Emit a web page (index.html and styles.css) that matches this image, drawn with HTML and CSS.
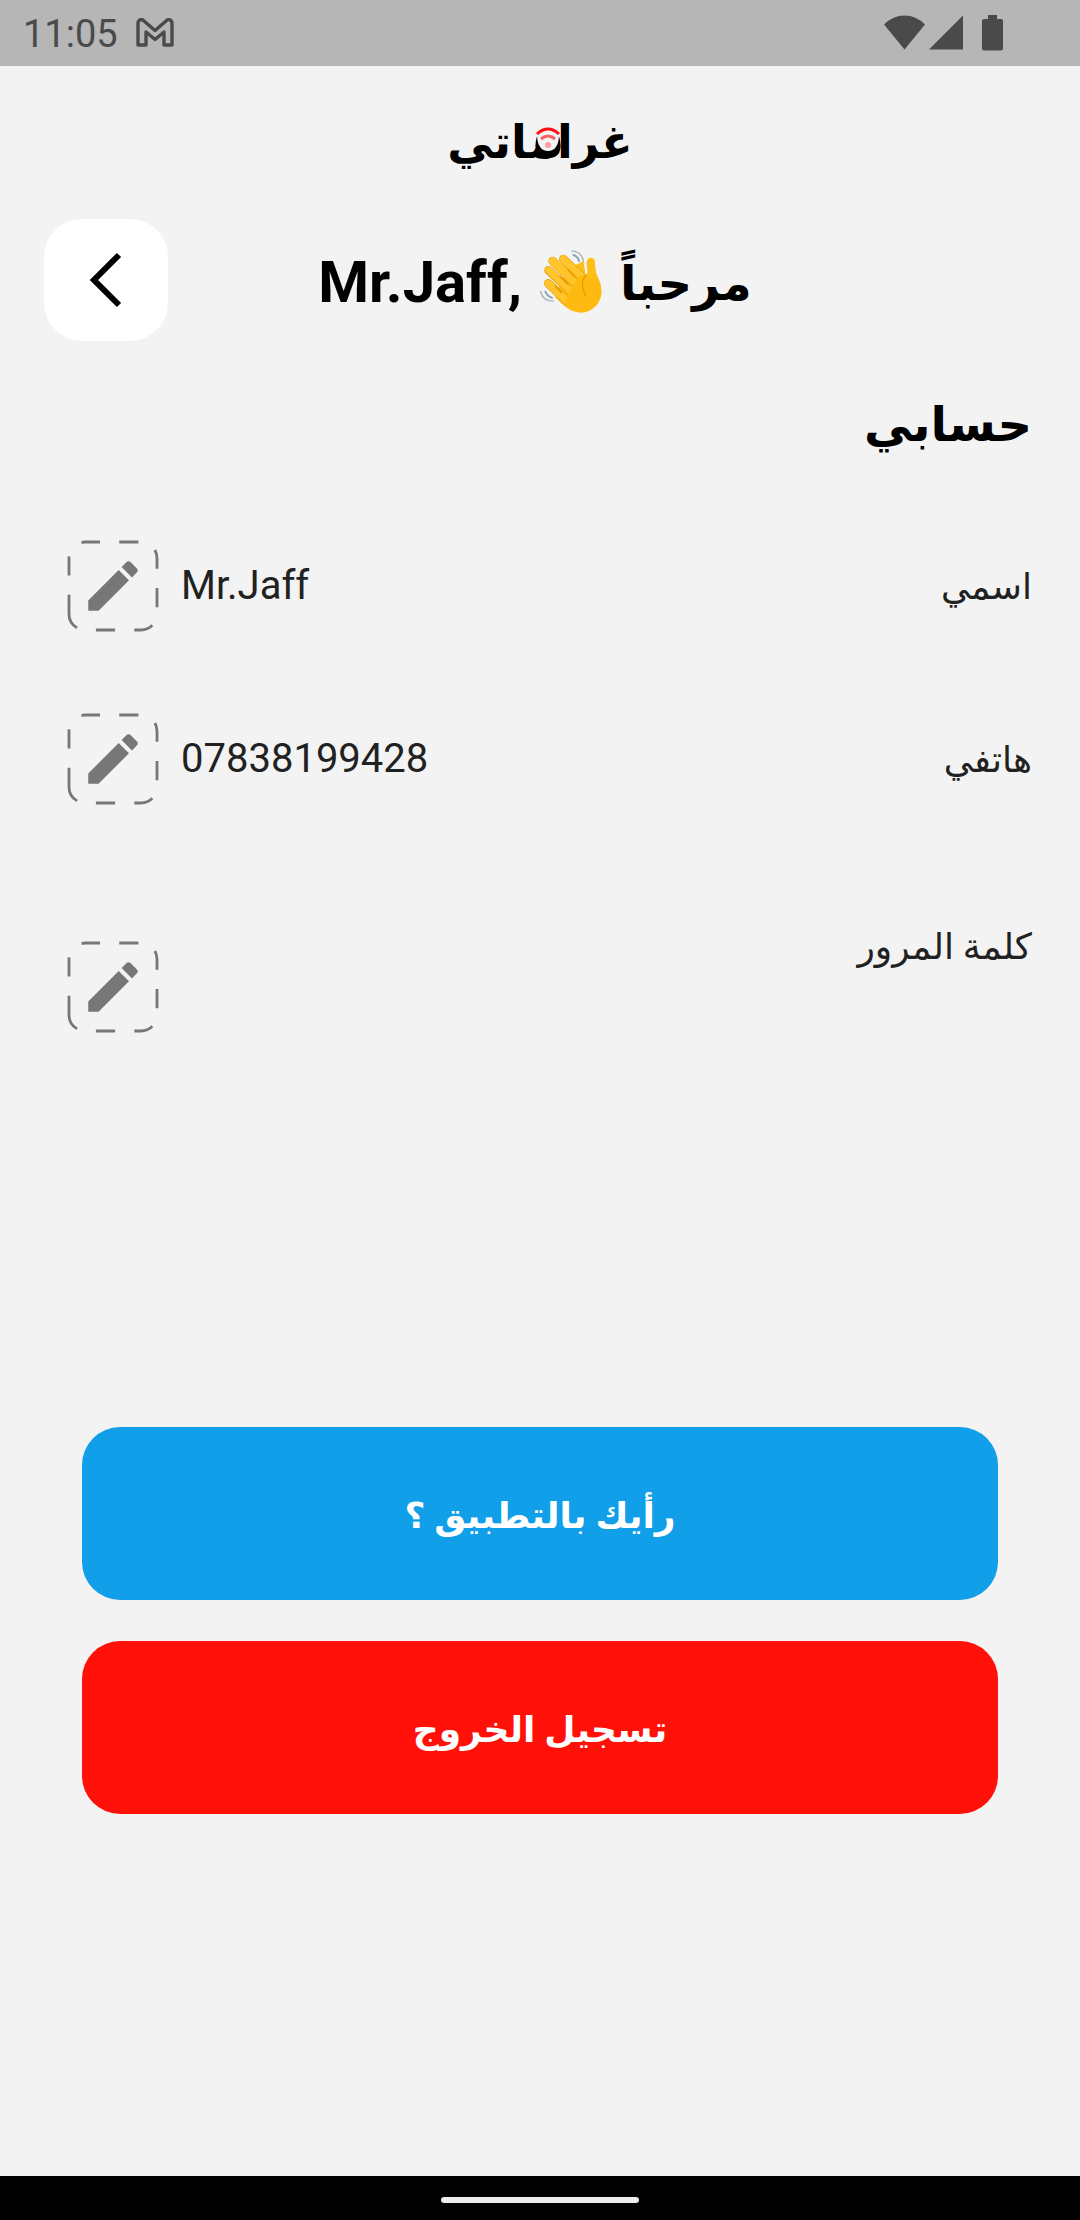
FILE: index.html
```html
<!DOCTYPE html>
<html lang="ar" dir="rtl">
<head>
  <meta charset="UTF-8">
  <meta name="viewport" content="width=device-width, initial-scale=1.0">
  <title>حسابي</title>
  <link rel="stylesheet" href="styles.css">
</head>
<body>

  <!-- shared edit icon -->
  <svg class="sprite" aria-hidden="true">
    <symbol id="edit" viewBox="0 0 96 96">
      <path d="M4 77V21A16 16 0 0 1 20 5H76A16 16 0 0 1 92 21V77A16 16 0 0 1 76 93H20A16 16 0 0 1 4 77" fill="none" stroke="#777" stroke-width="2.8" stroke-dasharray="19.2 19.2"/>
      <path d="M8 5H16.500" fill="none" stroke="#f3f3f3" stroke-width="5"/>
      <path transform="translate(15 16) scale(2.75)" fill="#777" d="M3 17.250V21h3.750L17.810 9.940l-3.750-3.750L3 17.250zM20.710 7.040c.39-.39.39-1.020 0-1.410l-2.340-2.340c-.39-.39-1.020-.39-1.410 0l-1.830 1.830 3.750 3.750 1.830-1.830z"/>
    </symbol>
  </svg>

  <div class="status-bar" dir="ltr">
    <div class="status-left">
      <span class="time">11:05</span>
      <svg class="gmail" width="38" height="30" viewBox="0 0 38 30">
        <path d="M2 27V5.500C2 1.500 5.500 0.500 8 3L19 12.500L30 3C32.500 0.500 36 1.500 36 5.500V27H28V14L19 21.500L10 14V27Z" fill="none" stroke="#4a4a4a" stroke-width="3.4" stroke-linejoin="round"/>
      </svg>
    </div>
    <div class="status-right">
      <svg width="80" height="36" viewBox="0 0 80 36">
        <path d="M0 9.500Q9 .5 20.500 .5T41 9.500L20.500 34.500Z" fill="#4a4a4a"/>
        <path d="M79 .5V34.500H45Z" fill="#4a4a4a"/>
      </svg>
      <svg width="21" height="36" viewBox="0 0 21 36">
        <path d="M6 0H15V4H19Q21 4 21 6V33.500Q21 35.500 19 35.500H2Q0 35.500 0 33.500V6Q0 4 2 4H6Z" fill="#4a4a4a"/>
      </svg>
    </div>
  </div>

  <main class="content">
    <div class="logo">
      <svg width="200" height="70" viewBox="0 0 200 70" role="img">
        <text class="logo-text" x="100" y="46" text-anchor="middle">غراماتي</text>
        <!-- wifi badge -->
        <circle cx="108" cy="29" r="11" fill="#f3f3f3"/>
        <path d="M97 24Q91 46 108 46T119 24Q118 39 108 39T97 24Z" fill="#000"/>
        <g fill="none" stroke-width="3">
          <path d="M97 22Q108 12 119 22" stroke="#ff0d0d"/>
          <path d="M101 27Q108 21 115 27" stroke="#ff6060"/>
        </g>
        <circle cx="108" cy="33" r="3" fill="#ff9c9c"/>
      </svg>
    </div>

    <header class="header">
      <span></span>
      <h1>
        <span class="hello">مرحباً</span>
        <svg class="wave" viewBox="0 0 186 190" role="img">
          <g fill="none" stroke="#b0bec5" stroke-width="5" stroke-linecap="round">
            <path d="M96 2Q128 4 130 36"/>
            <path d="M2 124Q8 152 40 152"/>
          </g>
          <g fill="none" stroke="#90a4ae" stroke-width="6" stroke-linecap="round">
            <path d="M100 14Q114 18 117 32"/>
            <path d="M16 124Q22 138 36 142"/>
          </g>
          <path d="M78 60L130 32L138 80Q145 68 140 44Q138 22 153 22Q165 22 165 38Q164 62 176 86Q195 130 170 164Q138 200 92 180Q72 168 45 140Z" fill="#ffbf16"/>
          <g fill="none" stroke="#e99b00" stroke-width="26" stroke-linecap="round">
            <path d="M25 99L82 154"/>
            <path d="M26 60L94 124"/>
            <path d="M38 32L106 98"/>
            <path d="M70 26L130 84"/>
          </g>
          <g fill="none" stroke="#ffc52b" stroke-width="22" stroke-linecap="round">
            <path d="M25 99L82 154"/>
            <path d="M27 60L94 124"/>
            <path d="M38 32L106 98"/>
            <path d="M70 26L130 84"/>
          </g>
          <path d="M88 124L118 78L140 74Q158 92 176 86Q195 130 170 164Q138 198 94 178L74 160Z" fill="#ffba12"/>
          <path d="M140 74Q116 94 137 136" fill="none" stroke="#e99b00" stroke-width="4" stroke-linecap="round"/>
          <path d="M84 58L104 79M60 78L84 102M46 108L64 126" fill="none" stroke="#e99b00" stroke-width="5" stroke-linecap="round"/>
        </svg>
        <bdi>Mr.Jaff,</bdi>
      </h1>
      <button class="back" type="button" aria-label="رجوع">
        <svg width="34" height="56" viewBox="0 0 34 56">
          <path d="M30 3L5 28L30 53" fill="none" stroke="#000" stroke-width="6"/>
        </svg>
      </button>
    </header>

    <section class="account">
      <h2>حسابي</h2>

      <div class="row">
        <span class="label">اسمي</span>
        <span class="value" dir="ltr">Mr.Jaff</span>
        <button class="edit" type="button" aria-label="تعديل الاسم"><svg><use href="#edit"/></svg></button>
      </div>

      <div class="row">
        <span class="label">هاتفي</span>
        <span class="value" dir="ltr">07838199428</span>
        <button class="edit" type="button" aria-label="تعديل الهاتف"><svg><use href="#edit"/></svg></button>
      </div>

      <div class="row password">
        <span class="label">كلمة المرور</span>
        <button class="edit" type="button" aria-label="تعديل كلمة المرور"><svg><use href="#edit"/></svg></button>
      </div>
    </section>

    <div class="actions">
      <button class="btn feedback" type="button">رأيك بالتطبيق ؟</button>
      <button class="btn logout" type="button">تسجيل الخروج</button>
    </div>
  </main>

  <div class="nav-bar">
    <div class="pill"></div>
  </div>

</body>
</html>
```
FILE: styles.css
```css
* {
  box-sizing: border-box;
}

body {
  margin: 0;
  min-height: 100vh;
  display: flex;
  flex-direction: column;
  background-color: #f3f3f3;
  color: #212121;
  font-family: Roboto, "DejaVu Sans", sans-serif;
}

button {
  border: none;
  padding: 0;
  font-family: inherit;
  cursor: pointer;
}

svg {
  display: block;
}

.sprite {
  position: absolute;
  width: 0;
  height: 0;
}

.status-bar {
  height: 66px;
  padding: 0 77px 0 23px;
  display: flex;
  justify-content: space-between;
  align-items: center;
  background-color: #b6b6b6;
  color: #4a4a4a;
}

.status-left,
.status-right {
  display: flex;
  align-items: center;
  gap: 18px;
}

.time {
  padding-top: 2px;
  font-size: 38px;
  line-height: 48px;
}

.content {
  flex: 1;
}

.logo {
  display: flex;
  justify-content: center;
  padding-top: 46px;
}

.logo-text {
  font-family: "DejaVu Sans", sans-serif;
  font-size: 46px;
  font-weight: bold;
  fill: #000;
}

.header {
  display: grid;
  grid-template-columns: 124px 1fr 124px;
  align-items: center;
  margin-top: 37px;
  padding: 0 44px;
}

.header h1 {
  margin: 0;
  padding: 4px 10px 0 0;
  display: flex;
  justify-content: center;
  align-items: center;
  gap: 18px;
  font-size: 58px;
  line-height: 80px;
  font-weight: bold;
  color: #000;
}

.header .hello {
  padding-top: 4px;
  font-size: 48px;
}

.wave {
  width: 62px;
  height: 64px;
}

.back {
  height: 122px;
  display: flex;
  justify-content: center;
  align-items: center;
  background-color: #fff;
  border-radius: 38px;
}

.account {
  padding: 0 48px 0 65px;
}

.account h2 {
  margin: 44px 0 72px;
  font-size: 48px;
  line-height: 80px;
  font-weight: bold;
  color: #000;
}

.row {
  display: flex;
  align-items: center;
  margin-bottom: 77px;
}

.label {
  flex: 1;
  padding-top: 4px;
  font-size: 36px;
  line-height: 48px;
}

.value {
  padding-top: 2px;
  font-size: 40px;
  line-height: 48px;
  margin-left: 20px;
}

.edit {
  width: 96px;
  height: 96px;
  background: none;
}

.edit svg {
  width: 96px;
  height: 96px;
}

.password {
  align-items: flex-start;
  padding-top: 36px;
}

.password .edit {
  margin-top: 19px;
}

.actions {
  display: flex;
  flex-direction: column;
  gap: 41px;
  margin-top: 393px;
  padding: 0 82px;
}

.btn {
  height: 173px;
  padding-top: 4px;
  border-radius: 38px;
  color: #fff;
  font-size: 36px;
  font-weight: bold;
}

.feedback {
  background-color: #109fe8;
}

.logout {
  background-color: #ff110a;
}

.nav-bar {
  height: 44px;
  padding-top: 4px;
  display: flex;
  justify-content: center;
  align-items: center;
  background-color: #000;
}

.pill {
  width: 198px;
  height: 6px;
  border-radius: 3px;
  background-color: #ececec;
}
```
